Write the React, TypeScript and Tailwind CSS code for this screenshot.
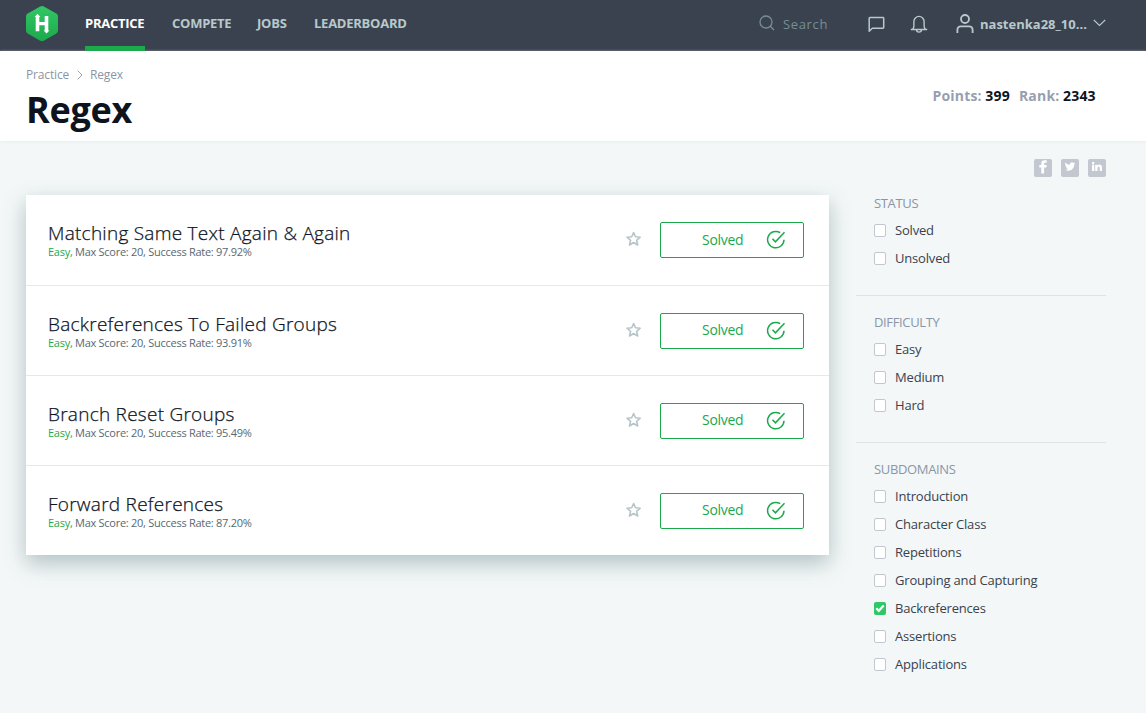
import React from "react";

const challenges = [
  { name: "Matching Same Text Again & Again", rate: "97.92%" },
  { name: "Backreferences To Failed Groups", rate: "93.91%" },
  { name: "Branch Reset Groups", rate: "95.49%" },
  { name: "Forward References", rate: "87.20%" },
];

const filters = [
  { title: "STATUS", items: ["Solved", "Unsolved"] },
  { title: "DIFFICULTY", items: ["Easy", "Medium", "Hard"] },
  {
    title: "SUBDOMAINS",
    items: [
      "Introduction",
      "Character Class",
      "Repetitions",
      "Grouping and Capturing",
      "Backreferences",
      "Assertions",
      "Applications",
    ],
  },
];

function Logo() {
  return (
    <svg width="32" height="37" viewBox="0 0 32 37" className="mt-[5px] shrink-0">
      <defs>
        <linearGradient id="logo" x1="0" y1="0" x2="0" y2="1">
          <stop offset="0" stopColor="#32c766" />
          <stop offset="1" stopColor="#1ba94c" />
        </linearGradient>
      </defs>
      <path
        d="M14.2 1.4Q16 .5 17.8 1.4L30.300 8.500Q32 9.600 32 11.500V25.500Q32 27.400 30.300 28.500L17.800 35.700Q16 36.600 14.200 35.700L1.700 28.500Q0 27.400 0 25.500V11.500Q0 9.600 1.700 8.500Z"
        fill="url(#logo)"
      />
      <path
        d="M11.500 8.800L14.400 11.900H13.300V17H18.700V11H22.300V25.500H23.400L20.500 28.600L17.600 25.500H18.700V20.200H13.300V26.300H9.700V11.900H8.600Z"
        fill="#fff"
      />
    </svg>
  );
}

function Header() {
  return (
    <header className="flex h-[51px] bg-[#3b424f] pl-[26px] pr-[40px] text-[13px] font-bold leading-[46px] text-[#b7c9cc]">
      <Logo />
      <nav className="ml-[27px] flex gap-[27px] tracking-[-0.250px]">
        <a className="h-[51px] w-[60px] border-b-[5px] border-[#1ba94c] text-white">PRACTICE</a>
        <a className="w-[58px]">COMPETE</a>
        <a className="w-[30px]">JOBS</a>
        <a className="w-[92px]">LEADERBOARD</a>
      </nav>
      <div className="ml-auto flex">
        <svg width="16" height="16" viewBox="0 0 16 16" className="mt-[15px]" fill="none" stroke="#738f93" strokeWidth="1.300">
          <circle cx="7" cy="7" r="6" />
          <path d="M11.300 11.300L15 15" />
        </svg>
        <span className="ml-[8px] w-[46px] font-normal leading-[48px] tracking-[0.650px] text-[#738f93]">Search</span>
        <svg width="17" height="17" viewBox="0 0 17 17" className="ml-[39px] mt-[16px]" fill="none" stroke="#b7c9cc" strokeWidth="1.500">
          <path d="M1.200 15.200V2.200Q1.200 1.500 1.900 1.500H15Q15.700 1.500 15.700 2.200V11.500Q15.700 12.200 15 12.200H4.300Z" strokeLinejoin="round" />
        </svg>
        <svg width="18" height="18" viewBox="0 0 18 18" className="ml-[25px] mt-[15px]" fill="none" stroke="#b7c9cc" strokeWidth="1.400">
          <path d="M.8 14.500H17.200M2.500 14.500Q3.900 13 3.900 11V6.500A5.100 5.100 0 0 1 14.100 6.500V11Q14.100 13 15.500 14.500M6.500 14.500Q6.500 17.100 9 17.100Q11.500 17.100 11.500 14.500" />
        </svg>
        <svg width="18" height="20" viewBox="0 0 18 20" className="ml-[28px] mt-[14px]" fill="none" stroke="#b7c9cc" strokeWidth="1.800">
          <circle cx="9" cy="5" r="4" />
          <path d="M1.400 19V16Q1.400 12.400 5 12.400H13Q16.600 12.400 16.600 16V19" />
        </svg>
        <span className="ml-[6px] w-[107px] leading-[48px]">nastenka28_10...</span>
        <svg width="13" height="8" viewBox="0 0 13 8" className="ml-[6px] mt-[19px]" fill="none" stroke="#b7c9cc" strokeWidth="1.100">
          <path d="M.8 1L6.500 6.500L12.200 1" />
        </svg>
      </div>
    </header>
  );
}

function Titlebar() {
  return (
    <section className="flex h-[90px] justify-between bg-white pl-[26px] pr-[49px] shadow-[0_1px_3px_#e8eeee]">
      <div>
        <div className="mt-[15px] flex h-[18px] items-center text-[12px] leading-[18px] tracking-[-0.150px] text-[#8b95a5]">
          <span className="w-[43px]">Practice</span>
          <svg width="6" height="10" viewBox="0 0 6 10" className="ml-[8px] mr-[7px]" fill="none" stroke="#9aa4b1">
            <path d="M.7 .7L5 5L.7 9.300" />
          </svg>
          <span>Regex</span>
        </div>
        <h1 className="mt-[5px] text-[36px] font-bold leading-[42px] tracking-[-0.300px] text-[#0e141e]">Regex</h1>
      </div>
      <div className="mt-[35px] flex text-[14px] font-bold leading-[20px] tracking-[0.200px] text-[#0e141e]">
        <span className="mr-[3.500px] text-[#979faf]">Points:</span>399
        <span className="ml-[9px] mr-[3.500px] text-[#979faf]">Rank:</span>
        <span className="w-[34px]">2343</span>
      </div>
    </section>
  );
}

function ChallengeRow({ name, rate }: { name: string; rate: string }) {
  return (
    <li className="group flex h-[90px] border-b border-[#e4eaea] pl-[22px] pr-[25px] pt-[27px] first:h-[91px] last:border-b-0">
      <div className="grow">
        <h2 className="h-[22px] whitespace-nowrap text-[19px] font-light leading-[22px] tracking-[0.260px] text-[#0e141e] [-webkit-text-stroke:0.250px_#0e141e]">{name}</h2>
        <p className="whitespace-nowrap text-[11px] leading-[16px] tracking-[-0.270px] text-[#576871]">
          <span className="text-[#1ba94c]">Easy,</span> Max Score: 20, Success Rate: {rate}
        </p>
      </div>
      <svg width="16" height="16" viewBox="0 0 16 16" className="mr-[18px] mt-[9px]" fill="none" stroke="#b7c4ca" strokeWidth="1.600" strokeLinejoin="round">
        <path d="M7.600 1.500L9.500 5.800L14.200 6.200L10.600 9.300L11.700 14L7.600 11.500L3.500 14L4.600 9.300L1 6.200L5.700 5.800Z" />
      </svg>
      <button className="flex h-[36px] w-[144px] rounded-[2px] border border-[#1ba94c] pl-[41px] text-[14px] leading-[32px] tracking-[-0.300px] text-[#1ba94c] group-first:leading-[34px]">
        <span className="w-[43px] text-left">Solved</span>
        <svg width="20" height="20" viewBox="0 0 20 20" className="ml-[21px] mt-[7px]" fill="none" stroke="#1ba94c" strokeWidth="1.500">
          <path d="M14.200 2.700A8.200 8.200 0 1 0 18 9.800M6.500 8.800L9.400 11.800L18.500 2.200" />
        </svg>
      </button>
    </li>
  );
}

function Checkbox({ checked }: { checked: boolean }) {
  if (!checked) return <span className="h-[13px] w-[12px] rounded-[2px] border border-[#c2c7d0] bg-white" />;
  return (
    <span className="flex h-[13px] w-[12px] items-center justify-center rounded-[2px] bg-[#2ec866]">
      <svg width="10" height="9" viewBox="0 0 10 9" fill="none" stroke="#fff" strokeWidth="2.200">
        <path d="M1.300 4.300L3.800 6.800L8.700 1.500" />
      </svg>
    </span>
  );
}

function Social() {
  return (
    <div className="flex h-[18px] justify-end gap-[9px]">
      <svg width="18" height="18" viewBox="0 0 18 18">
        <rect width="18" height="18" rx="2" fill="#c2c7d0" />
        <path d="M7.300 14.500V8.400H5.300V5.900H7.300V4.400Q7.300 1.300 10.300 1.300H12.700V3.700H11.200Q10.100 3.700 10.100 4.700V5.900H12.700L12.400 8.400H10.100V14.500Z" fill="#fff" />
      </svg>
      <svg width="18" height="18" viewBox="0 0 18 18">
        <rect width="18" height="18" rx="2" fill="#c2c7d0" />
        <path d="M14.300 4.400C13.900 4.600 13.500 4.700 13.100 4.700C13.500 4.400 13.900 4 14 3.400C13.600 3.700 13.100 3.800 12.600 3.900C11 2.300 8.600 3.600 9 5.800C7.200 5.700 5.600 4.900 4.500 3.500C3.900 4.600 4.200 5.900 5.200 6.500C4.900 6.500 4.600 6.400 4.300 6.300C4.300 7.300 5 8.200 6 8.500C5.700 8.600 5.400 8.600 5.100 8.500C5.400 9.300 6.100 9.900 7 9.900C6.100 10.600 5.100 10.900 4 10.800C8.200 13.400 13.300 10.600 13.200 5.600C13.600 5.300 14 4.900 14.300 4.400Z" fill="#fff" />
      </svg>
      <svg width="18" height="18" viewBox="0 0 18 18">
        <rect width="18" height="18" rx="2" fill="#c2c7d0" />
        <path d="M4 5.700H6.300V12H4ZM7.200 5.700H9.400V6.600Q11 4.700 13 6Q14 6.700 14 8.800V12H11.700V9Q11.700 7.400 10.600 7.400Q9.500 7.400 9.500 9V12H7.200Z" fill="#fff" />
        <circle cx="5.100" cy="4" r="1.250" fill="#fff" />
      </svg>
    </div>
  );
}

function Sidebar() {
  return (
    <aside className="w-[250px] pt-[18px] text-[13px]">
      <Social />
      <div className="mt-[16px]">
        {filters.map((group) => (
          <section key={group.title} className="mb-[16px] border-b border-[#dde3e5] pb-[23px] pl-[18px] last:border-b-0">
            <h3 className="h-[23px] leading-[20px] tracking-[-0.350px] text-[#8b95a8]">{group.title}</h3>
            {group.items.map((item) => (
              <label key={item} className="flex h-[28px] items-center text-[#39424e]">
                <Checkbox checked={item === "Backreferences"} />
                <span className="ml-[9px] pt-[2px] tracking-[-0.180px]">{item}</span>
              </label>
            ))}
          </section>
        ))}
      </div>
    </aside>
  );
}

export default function App() {
  return (
    <div className="h-[713px] overflow-hidden bg-[#f3f7f7] font-['Open_Sans',sans-serif]">
      <Header />
      <Titlebar />
      <main className="flex gap-[27px] px-[26px]">
        <ul className="mt-[54px] h-[360px] w-[803px] bg-white shadow-[0_8px_20px_rgba(57,95,101,0.350)]">
          {challenges.map((c) => (
            <ChallengeRow key={c.name} {...c} />
          ))}
        </ul>
        <Sidebar />
      </main>
    </div>
  );
}
